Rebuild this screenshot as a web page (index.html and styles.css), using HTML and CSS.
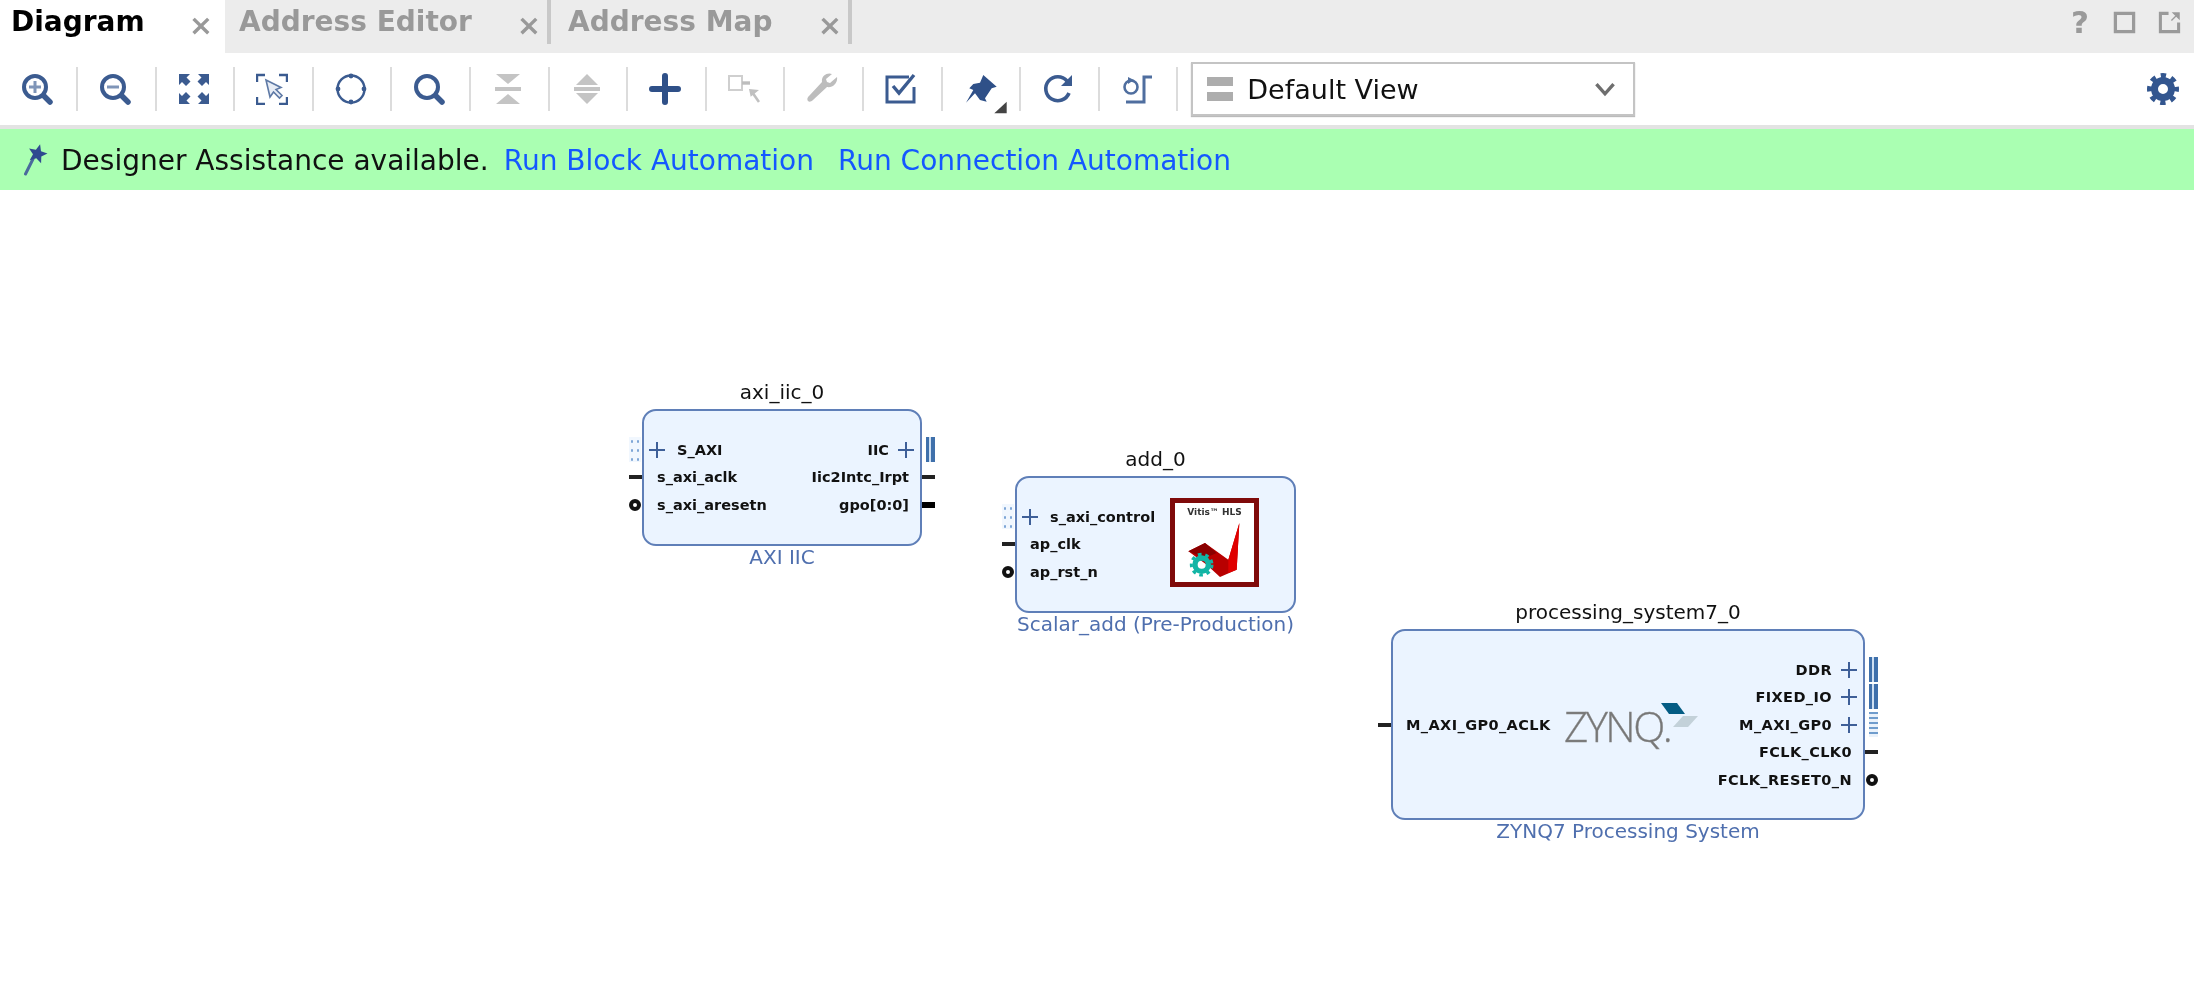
FILE: index.html
```html
<!DOCTYPE html>
<html lang="en">
<head>
<meta charset="utf-8">
<title>Diagram</title>
<link rel="stylesheet" href="styles.css">
</head>
<body>
<div class="app">
  <header class="tabbar">
    <div class="tab tab-active"><span class="tab-label">Diagram</span><span class="tab-x">×</span></div>
    <div class="tab tab-editor"><span class="tab-label">Address Editor</span><span class="tab-x">×</span></div>
    <div class="tab tab-map"><span class="tab-label">Address Map</span><span class="tab-x">×</span></div>
    <div class="win-icons">
      <span class="win-help">?</span>
      <svg class="win-icon" viewBox="0 0 24 24"><rect x="2.500" y="2.500" width="19" height="19" fill="none" stroke="#9a9a9a" stroke-width="3.400"/></svg>
      <svg class="win-icon" viewBox="0 0 24 24"><path d="M11 2.500H2.500v19h19V12" fill="none" stroke="#9a9a9a" stroke-width="3.200"/><path d="M16 2h6v6zM19 5l-5 5" fill="#9a9a9a" stroke="#9a9a9a" stroke-width="1.400"/></svg>
    </div>
  </header>

  <nav class="toolbar">
    <div class="tool"><svg viewBox="0 0 32 32"><circle cx="14" cy="14" r="11" fill="none" stroke="#3b5b90" stroke-width="4"/><path d="M14 8v12M8 14h12" stroke="#7f95b8" stroke-width="3"/><path d="M23 23l6 6" stroke="#3b5b90" stroke-width="5.500" stroke-linecap="round"/></svg></div><i class="sep"></i>
    <div class="tool"><svg viewBox="0 0 32 32"><circle cx="14" cy="14" r="11" fill="none" stroke="#3b5b90" stroke-width="4"/><path d="M8 14h12" stroke="#7f95b8" stroke-width="3"/><path d="M23 23l6 6" stroke="#3b5b90" stroke-width="5.500" stroke-linecap="round"/></svg></div><i class="sep"></i>
    <div class="tool"><svg viewBox="0 0 32 32"><g fill="#3b5b90"><path d="M1 1h11l-3.500 3.500 4 4-4.500 4.500-4-4L1 12z"/><path d="M31 1H20l3.500 3.500-4 4 4.500 4.500 4-4L31 12z"/><path d="M1 31H12l-3.500-3.500 4-4-4.500-4.500-4 4L1 20z"/><path d="M31 31H20l3.500-3.500-4-4 4.500-4.500 4 4L31 20z"/></g></svg></div><i class="sep"></i>
    <div class="tool"><svg viewBox="0 0 32 32"><path d="M1 9V2h8M23 2h8v7M31 24v7h-8M9 31H1v-7" fill="none" stroke="#3b5b90" stroke-width="2.400"/><path d="M10 7l4 17 3.500-5 6 6 2.500-2.500-6-6 5-2z" fill="#e8edf5" stroke="#5f7aa6" stroke-width="1.600"/></svg></div><i class="sep"></i>
    <div class="tool"><svg viewBox="0 0 32 32"><circle cx="16" cy="16" r="13.500" fill="none" stroke="#3b5b90" stroke-width="2.400"/><g fill="#3b5b90"><circle cx="16" cy="3" r="2.400"/><circle cx="16" cy="29" r="2.400"/><circle cx="3" cy="16" r="2.400"/><circle cx="29" cy="16" r="2.400"/></g></svg></div><i class="sep"></i>
    <div class="tool"><svg viewBox="0 0 32 32"><circle cx="14" cy="14" r="11" fill="none" stroke="#3b5b90" stroke-width="4"/><path d="M23 23l6 6" stroke="#3b5b90" stroke-width="5.500" stroke-linecap="round"/></svg></div><i class="sep"></i>
    <div class="tool"><svg viewBox="0 0 32 32"><g fill="#c4c4c4"><path d="M4 1h24L16 11z"/><path d="M4 31h24L16 21z"/><rect x="3" y="14" width="26" height="4"/></g></svg></div><i class="sep"></i>
    <div class="tool"><svg viewBox="0 0 32 32"><g fill="#c4c4c4"><path d="M16 1l11 11H5z"/><path d="M16 31l11-11H5z"/><rect x="3" y="14" width="26" height="4"/></g></svg></div><i class="sep"></i>
    <div class="tool"><svg viewBox="0 0 32 32"><path d="M16 3v26M3 16h26" stroke="#2f5088" stroke-width="6" stroke-linecap="round"/></svg></div><i class="sep"></i>
    <div class="tool"><svg viewBox="0 0 32 32"><rect x="1" y="3" width="13" height="14" fill="#fff" stroke="#cfcfcf" stroke-width="2"/><path d="M14 10h8" stroke="#bdbdbd" stroke-width="3.400"/><path d="M21 16l10 1-8.300 6.700z" fill="#c0c0c0"/><path d="M24 19l7 10" stroke="#c0c0c0" stroke-width="2.600"/></svg></div><i class="sep"></i>
    <div class="tool"><svg viewBox="0 0 32 32"><path d="M31 4l-7 6-3-1-1-3 6-5c-5-2-11 2-10 8l-13 14c-2 2-2 4-1 5s3 1 5-1l14-13c6 1 11-4 10-10z" fill="#bdbdbd"/></svg></div><i class="sep"></i>
    <div class="tool"><svg viewBox="0 0 32 32"><path d="M29 14v15H2V4h22" fill="none" stroke="#3b5b90" stroke-width="3"/><path d="M8 13l6 7L29 2" fill="none" stroke="#3b5b90" stroke-width="3.400"/></svg></div><i class="sep"></i>
    <div class="tool tool-pin"><svg viewBox="0 0 42 40"><path d="M18.300 1L31.700 12.700 26.700 14.300 20 24.300 21.700 27.700 15 26 10 19.300 1 28.700 8.300 16 4.300 14.300 8.300 10 15 8.700z" fill="#2f5088"/><path d="M41.700 27.700V39.300H29.300z" fill="#444"/></svg></div><i class="sep"></i>
    <div class="tool"><svg viewBox="0 0 32 32"><path d="M27 20a12 12 0 1 1-2-12" fill="none" stroke="#3b5b90" stroke-width="3.600"/><path d="M30 2v11H19z" fill="#3b5b90"/></svg></div><i class="sep"></i>
    <div class="tool"><svg viewBox="0 0 32 32"><circle cx="10" cy="14" r="6.500" fill="none" stroke="#4f6e9f" stroke-width="2.600"/><path d="M7 4l6 3-6 4z" fill="#4f6e9f"/><path d="M31 4H23V29H5" fill="none" stroke="#4f6e9f" stroke-width="3"/></svg></div><i class="sep sep-last"></i>
    <div class="select">
      <span class="select-icon"><b></b><b></b></span>
      <span class="select-text">Default View</span>
      <svg class="select-caret" viewBox="0 0 20 14"><path d="M2 2l8 9 8-9" fill="none" stroke="#6e6e6e" stroke-width="3.200"/></svg>
    </div>
    <svg class="gear" viewBox="0 0 32 32"><circle cx="16" cy="16" r="8.500" fill="none" stroke="#33568f" stroke-width="7"/><circle cx="16" cy="16" r="13.500" fill="none" stroke="#33568f" stroke-width="5" stroke-dasharray="5.300 5.300" stroke-dashoffset="2.650"/></svg>
  </nav>

  <div class="assist">
    <svg class="wand" viewBox="0 0 24 34"><path d="M1.500 30L9 15" stroke="#4a6a9c" stroke-width="3" stroke-linecap="round"/><path d="M16.100 .3L17 7.200 23.500 9.500 17.300 12.500 17.100 19.300 12.300 14.300 5.700 16.300 9 10.200 5.100 4.600 11.900 5.800z" fill="#2f4a90"/></svg>
    <span class="assist-text">Designer Assistance available.</span>
    <a class="link link-block">Run Block Automation</a>
    <a class="link">Run Connection Automation</a>
  </div>

  <main class="canvas">
    <section class="node node-iic">
      <div class="node-title">axi_iic_0</div>
      <div class="box">
        <div class="ports ports-left">
          <div class="port port-bus"><i class="pin pin-l pin-busl"></i><i class="plus"></i><span class="pname">S_AXI</span></div>
          <div class="port"><i class="pin pin-l pin-line"></i><span class="pname">s_axi_aclk</span></div>
          <div class="port"><i class="pin pin-l pin-dot"></i><span class="pname">s_axi_aresetn</span></div>
        </div>
        <div class="ports ports-right">
          <div class="port"><span class="pname">IIC</span><i class="plus"></i><i class="pin pin-r pin-busr"></i></div>
          <div class="port"><span class="pname">Iic2Intc_Irpt</span><i class="pin pin-r pin-line"></i></div>
          <div class="port"><span class="pname">gpo[0:0]</span><i class="pin pin-r pin-thick"></i></div>
        </div>
      </div>
      <div class="node-sub">AXI IIC</div>
    </section>

    <section class="node node-add">
      <div class="node-title">add_0</div>
      <div class="box">
        <div class="ports ports-left">
          <div class="port port-bus"><i class="pin pin-l pin-busl"></i><i class="plus"></i><span class="pname">s_axi_control</span></div>
          <div class="port"><i class="pin pin-l pin-line"></i><span class="pname">ap_clk</span></div>
          <div class="port"><i class="pin pin-l pin-dot"></i><span class="pname">ap_rst_n</span></div>
        </div>
        <div class="hls">
          <svg class="hls-mark" viewBox="0 0 237 237"><path d="M40 145l50-25 70 50 33-110-8 140-50 22-40-37z" fill="#b80000"/><path d="M40 145l50-25 35 30-35 15z" fill="#8a0000"/><path d="M160 170l33-110-8 140-25 10z" fill="#e00000"/><circle cx="80" cy="185" r="20" fill="none" stroke="#12b5a5" stroke-width="16"/><circle cx="80" cy="185" r="31" fill="none" stroke="#12b5a5" stroke-width="9" stroke-dasharray="11 11.300"/></svg>
          <span class="hls-text">Vitis™ HLS</span>
        </div>
      </div>
      <div class="node-sub">Scalar_add (Pre-Production)</div>
    </section>

    <section class="node node-ps">
      <div class="node-title">processing_system7_0</div>
      <div class="box">
        <div class="ports ports-left ports-mid">
          <div class="port"><i class="pin pin-l pin-line"></i><span class="pname">M_AXI_GP0_ACLK</span></div>
        </div>
        <div class="zynq">
          <span class="zynq-text">ZYNQ.</span>
          <svg class="zynq-mark" viewBox="0 0 40 25"><path d="M2 0h16l8 11H10z" fill="#045c84"/><path d="M14 24l10-11h15L29 24z" fill="#c3d1d9"/></svg>
        </div>
        <div class="ports ports-right">
          <div class="port"><span class="pname">DDR</span><i class="plus"></i><i class="pin pin-r pin-busr"></i></div>
          <div class="port"><span class="pname">FIXED_IO</span><i class="plus"></i><i class="pin pin-r pin-busr"></i></div>
          <div class="port"><span class="pname">M_AXI_GP0</span><i class="plus"></i><i class="pin pin-r pin-busd"></i></div>
          <div class="port"><span class="pname">FCLK_CLK0</span><i class="pin pin-r pin-line"></i></div>
          <div class="port"><span class="pname">FCLK_RESET0_N</span><i class="pin pin-r pin-dot"></i></div>
        </div>
      </div>
      <div class="node-sub">ZYNQ7 Processing System</div>
    </section>
  </main>
</div>
</body>
</html>
```
FILE: styles.css
```css
* { box-sizing: border-box; }
html, body { margin: 0; padding: 0; height: 100%; background: #fff; }
body { font-family: "DejaVu Sans", sans-serif; overflow: hidden; }
.app { width: 2194px; height: 985px; display: flex; flex-direction: column; filter: blur(0.45px); }

/* Tabs */
.tabbar { height: 53px; background: #ececec; display: flex; align-items: stretch; flex: none; }
.tab { position: relative; display: flex; align-items: center; }
.tab-active { width: 225px; background: #fff; padding: 0 0 9px 11px; }
.tab-editor { width: 326px; padding-left: 14px; border-right: 4px solid #c8c8c8; margin-bottom: 9px; }
.tab-map { width: 301px; padding-left: 17px; border-right: 4px solid #c8c8c8; margin-bottom: 9px; }
.tab-label { font-weight: 700; font-size: 28px; color: #999; padding-bottom: 1px; }
.tab-active .tab-label { color: #000; }
.tab-x { position: absolute; font-size: 29px; line-height: 38px; color: #999; font-weight: 700; }
.tab-active .tab-x { right: 12px; top: 6px; }
.tab-editor .tab-x, .tab-map .tab-x { right: 6px; top: 6px; }
.win-icons { margin-left: auto; display: flex; align-items: center; gap: 22px; padding: 0 13px 9px 0; }
.win-help { font-size: 31px; font-weight: 700; color: #9a9a9a; width: 22px; text-align: center; }
.win-icon { width: 23px; height: 23px; }

/* Toolbar */
.toolbar { height: 76px; flex: none; display: flex; align-items: center; background: #fff; border-bottom: 4px solid #e3e3e3; padding-right: 15px; }
.tool { width: 68px; height: 31px; margin-right: 8px; padding-left: 5px; display: flex; justify-content: center; align-items: center; }
.tool svg { width: 32px; height: 32px; display: block; flex: none; }
.tool-pin svg { width: 42px; height: 40px; transform: translate(6px, 5px); }
.sep { width: 2px; height: 44px; background: #dcdcdc; margin-right: 0.6px; flex: none; }
.sep-last { margin-right: 13px; }
.select { width: 444px; height: 54px; border: 2px solid #c4c4c4; box-shadow: 0 1px 1px #bbb; display: flex; align-items: center; padding: 0 17px 0 14px; }
.select-icon { width: 26px; display: flex; flex-direction: column; gap: 6px; margin-right: 14px; }
.select-icon b { display: block; height: 9px; background: #adadad; }
.select-text { font-size: 27px; color: #111; }
.select-caret { width: 22px; height: 15px; margin-left: auto; }
.gear { width: 32px; height: 32px; margin-left: auto; }

/* Assistance */
.assist { height: 61px; flex: none; background: #aaffb2; display: flex; align-items: center; padding: 2px 0 0 24px; font-size: 28px; }
.wand { width: 24px; height: 34px; margin-right: 13px; }
.assist-text { color: #111; }
.link { color: #1458ff; margin-left: 24px; }
.link-block { margin-left: 15px; }

/* Diagram */
.canvas { position: relative; flex: 1; background: #fff; }
.node { position: absolute; display: flex; flex-direction: column; align-items: center; }
.node-iic { left: 642px; top: 188px; width: 280px; }
.node-add { left: 1015px; top: 255px; width: 281px; }
.node-ps { left: 1391px; top: 408px; width: 474px; }
.node-title { height: 31px; line-height: 29px; font-size: 20px; color: #111; white-space: nowrap; }
.node-sub { font-size: 20px; height: 23px; line-height: 22px; color: #4f6fae; white-space: nowrap; }
.box { width: 100%; background: #ebf4ff; border: 2px solid #5f7fb8; border-radius: 14px; display: flex; justify-content: space-between; position: relative; }
.node-iic .box { height: 137px; padding-top: 25px; }
.node-add .box { height: 137px; padding-top: 25px; }
.node-ps .box { height: 191px; padding-top: 25px; }
.ports { display: flex; flex-direction: column; position: relative; }
.ports-mid { padding-top: 55px; }
.port { position: relative; height: 27.5px; display: flex; align-items: center; font-size: 14.5px; font-weight: 700; color: #111; white-space: nowrap; }
.node-ps .pname { letter-spacing: 0.4px; }
.ports-left .port { padding-left: 13px; }
.ports-left .port-bus { padding-left: 5px; gap: 12px; }
.ports-right .port { padding-right: 11px; justify-content: flex-end; }
.ports-right .port:has(.plus) { padding-right: 6px; }
.plus { display: block; width: 16px; height: 16px; flex: none; background: linear-gradient(#3e5f98, #3e5f98) center / 100% 2px no-repeat, linear-gradient(#3e5f98, #3e5f98) center / 2px 100% no-repeat; }
.ports-right .plus { margin-left: 9px; }
.pin { position: absolute; top: 50%; display: block; }
.ports-left .pin-l { left: -15px; }
.ports-right .pin-r { right: -15px; }
.pin-line { width: 13px; height: 4px; margin-top: -2px; background: #222; }
.pin-thick { width: 13px; height: 6px; margin-top: -3px; background: #000; }
.pin-dot { width: 12px; height: 12px; margin-top: -6px; border: 4px solid #111; border-radius: 50%; }
.pin-busl { width: 12px; height: 25px; margin-top: -13px; background: radial-gradient(circle, #7ea6d6 1px, transparent 1.500px) 0 0 / 6px 9px, #f1f7fe; }
.pin-busr { width: 9px; height: 25px; margin-top: -13px; background: linear-gradient(90deg, #3f70ab 3px, #cfe0f2 3px, #cfe0f2 5px, #3f70ab 5px); }
.pin-busd { width: 9px; height: 25px; margin-top: -13px; background: repeating-linear-gradient(#6f9ccc 0 2px, #eaf2fb 2px 5px); }

.hls { width: 89px; height: 89px; border: 5px solid #7f0a0a; background: #fff; position: absolute; left: 153px; top: 20px; }
.hls-text { position: absolute; left: 0; right: 0; top: 2px; text-align: center; font-size: 9px; line-height: 14px; color: #333; white-space: nowrap; font-weight: 700; }
.hls-mark { position: absolute; left: 0; top: 0; width: 79px; height: 79px; }

.zynq { position: absolute; left: 172px; top: 52px; width: 135px; height: 46px; }
.zynq-text { position: absolute; left: -1px; top: 23px; font-family: "Open Sans", sans-serif; font-weight: 300; font-size: 42px; line-height: 40px; color: #777; -webkit-text-stroke: 0.4px #888; letter-spacing: -2.5px; }
.zynq-mark { position: absolute; left: 94px; top: 20px; width: 40px; height: 25px; }
```
